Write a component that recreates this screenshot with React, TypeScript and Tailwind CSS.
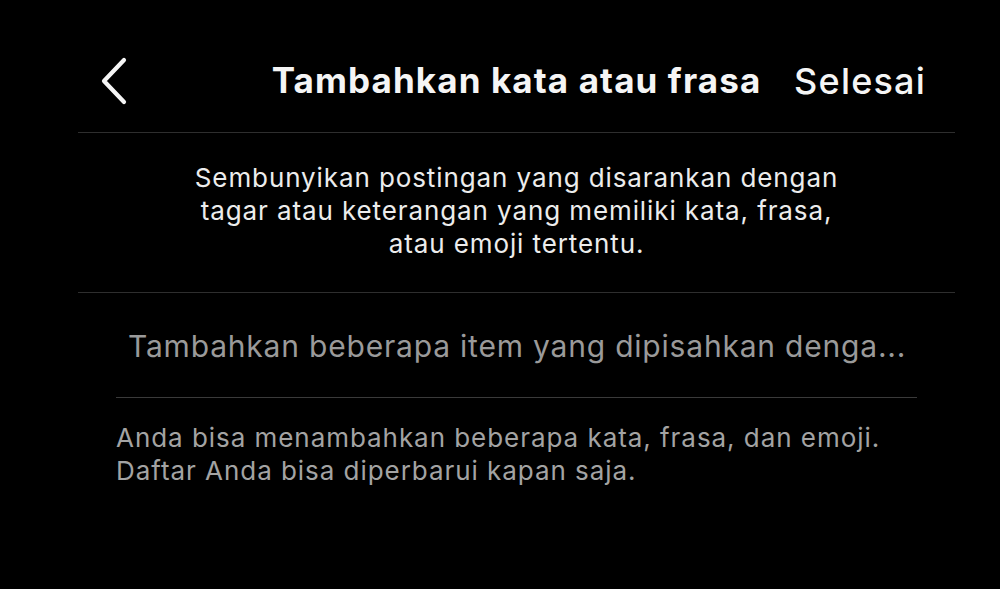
import React from "react";

export default function App() {
  return (
    <div className="w-[1000px] h-[589px] bg-black overflow-hidden" style={{ fontFamily: "Inter, 'Noto Sans', sans-serif" }}>
      <div className="ml-[78px] w-[877px]">
        <div className="h-[133px] grid grid-cols-[1fr_auto_1fr] items-center pt-[29px] border-b border-[#2e2e2e]">
          <div className="pl-[21px] flex items-center">
            <svg width="30" height="48" viewBox="0 0 30 48" fill="none">
              <path d="M25 3 L5 24 L25 45" stroke="#f5f5f5" strokeWidth="4.2" strokeLinecap="round" strokeLinejoin="round" />
            </svg>
          </div>
          <div className="text-[35px] font-bold text-[#f5f5f5] tracking-[1.1px] leading-none">Tambahkan kata atau frasa</div>
          <div className="justify-self-end pr-[29px] text-[36px] font-medium text-[#f5f5f5] tracking-[1.2px] leading-none">Selesai</div>
        </div>
        <div className="h-[160px] border-b border-[#2e2e2e] flex items-center justify-center">
          <p className="text-center text-[26px] leading-[33px] tracking-[0.9px] text-[#ececec] mb-[4px]">
            Sembunyikan postingan yang disarankan dengan
            <br />
            tagar atau keterangan yang memiliki kata, frasa,
            <br />
            atau emoji tertentu.
          </p>
        </div>
        <div className="mx-[38px]">
          <div className="h-[105px] border-b border-[#3a3a3a] flex items-center pl-[12px] pt-[2px]">
            <span className="text-[30px] tracking-[0.8px] text-[#9a9a9a] whitespace-nowrap">Tambahkan beberapa item yang dipisahkan denga...</span>
          </div>
          <p className="pt-[23px] text-[26px] leading-[33px] tracking-[0.95px] text-[#a3a3a3]">
            Anda bisa menambahkan beberapa kata, frasa, dan emoji.
            <br />
            Daftar Anda bisa diperbarui kapan saja.
          </p>
        </div>
      </div>
    </div>
  );
}
